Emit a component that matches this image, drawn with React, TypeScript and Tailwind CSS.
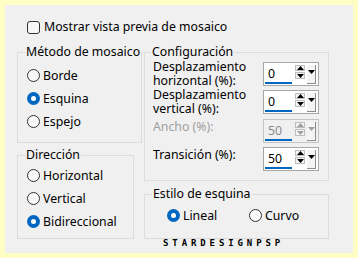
import React from "react";

const font = { fontFamily: '"Noto Sans", "Open Sans", sans-serif' };

function Radio({ checked, label }: { checked?: boolean; label: string }) {
  return (
    <div className="flex items-center h-[23px] whitespace-nowrap">
      {checked ? (
        <span className="shrink-0 w-[13px] h-[13px] rounded-full bg-[#0067c0] flex items-center justify-center">
          <span className="w-[5px] h-[5px] rounded-full bg-white" />
        </span>
      ) : (
        <span className="shrink-0 w-[13px] h-[13px] rounded-full border border-[#333333] bg-[#f7f7f7]" />
      )}
      <span className="ml-[3px] leading-[14px]">{label}</span>
    </div>
  );
}

function Tri({ dir, color }: { dir: "up" | "down"; color: string }) {
  return (
    <svg width="7" height="4" viewBox="0 0 7 4" className="block">
      {dir === "up" ? (
        <polygon points="3.5,0 7,4 0,4" fill={color} />
      ) : (
        <polygon points="0,0 7,0 3.5,4" fill={color} />
      )}
    </svg>
  );
}

function Spin({ value, disabled }: { value: string; disabled?: boolean }) {
  const c = disabled ? "#a0a0a0" : "#000000";
  return (
    <div
      className={`w-[56px] h-[24px] border flex ${
        disabled ? "border-[#c4c4c4] bg-[#f0f0f0]" : "border-[#a6a6a6] bg-white"
      }`}
    >
      <div className="w-[30px] pl-[1px] pt-[1px]">
        <div
          className={`w-[27px] h-[20px] border-b-2 border-[#0067c0] pl-[3px] leading-[20px] ${
            disabled ? "text-[#8a8a8a]" : "text-black"
          }`}
        >
          {value}
        </div>
      </div>
      <div className="flex flex-col pt-[2px] gap-[1px] ml-[1px]">
        <div className="w-[10px] h-[6px] border border-[#bdbdbd] bg-[#f4f4f4] flex items-center justify-center">
          <Tri dir="up" color={c} />
        </div>
        <div className="w-[10px] h-[7px] border border-[#bdbdbd] bg-[#f4f4f4] flex items-center justify-center">
          <Tri dir="down" color={c} />
        </div>
      </div>
      <div className="ml-[2px] mt-[2px] w-[9px] h-[19px] border-r border-b border-[#8c8c8c] bg-[#f4f4f4] flex justify-center pt-[5px]">
        <Tri dir="down" color={c} />
      </div>
    </div>
  );
}

export default function App() {
  return (
    <div
      className="w-[358px] h-[258px] bg-[#fefec4] p-[5px] text-[12.3px] text-black"
      style={font}
    >
      <div className="relative w-[348px] h-[248px] bg-[#f0f0f0] pt-[15px] pl-[12px]">
        <div className="flex items-center h-[14px] pl-[10px]">
          <span className="w-[13px] h-[13px] rounded-[3px] border border-[#333333] bg-[#f7f7f7]" />
          <span className="ml-[4px] leading-[14px] whitespace-nowrap">Mostrar vista previa de mosaico</span>
        </div>

        <div className="flex mt-[11px] gap-[10px]">
          <div className="flex flex-col gap-[5px] w-[117px]">
            <fieldset className="h-[98px] border border-[#dcdcdc] m-0 p-0 pl-[9px]">
              <legend className="ml-[-2px] px-[1px] leading-[14px] whitespace-nowrap">Método de mosaico</legend>
              <div className="pt-[5px] flex flex-col">
                <Radio label="Borde" />
                <Radio label="Esquina" checked />
                <Radio label="Espejo" />
              </div>
            </fieldset>
            <fieldset className="h-[91px] border border-[#dcdcdc] m-0 p-0 pl-[9px]">
              <legend className="ml-[-2px] px-[1px] leading-[14px] whitespace-nowrap">Dirección</legend>
              <div className="pt-[2px] flex flex-col">
                <Radio label="Horizontal" />
                <Radio label="Vertical" />
                <Radio label="Bidireccional" checked />
              </div>
            </fieldset>
          </div>

          <div className="flex flex-col gap-[6px] w-[185px]">
            <fieldset className="h-[136px] border border-[#dcdcdc] m-0 p-0 pl-[8px] pr-[9px]">
              <legend className="ml-[-2px] px-[1px] leading-[14px] whitespace-nowrap">Configuración</legend>
              <div className="pt-[1px] flex flex-col">
                <div className="flex justify-between h-[28px]">
                  <div className="leading-[14px] whitespace-nowrap">
                    Desplazamiento
                    <br />
                    horizontal (%):
                  </div>
                  <div className="mt-[2px]">
                    <Spin value="0" />
                  </div>
                </div>
                <div className="flex justify-between h-[29px]">
                  <div className="leading-[14px] whitespace-nowrap">
                    Desplazamiento
                    <br />
                    vertical (%):
                  </div>
                  <div className="mt-[2px]">
                    <Spin value="0" />
                  </div>
                </div>
                <div className="flex justify-between h-[28px]">
                  <div className="leading-[14px] pt-[3px] text-[#a0a0a0] whitespace-nowrap">Ancho (%):</div>
                  <div className="mt-[2px]">
                    <Spin value="50" disabled />
                  </div>
                </div>
                <div className="flex justify-between h-[28px]">
                  <div className="leading-[14px] pt-[3px] whitespace-nowrap">Transición (%):</div>
                  <div className="mt-[2px]">
                    <Spin value="50" />
                  </div>
                </div>
              </div>
            </fieldset>
            <fieldset className="h-[52px] border border-[#dcdcdc] m-0 p-0 pl-[22px]">
              <legend className="ml-[-15px] px-[1px] leading-[14px] whitespace-nowrap">Estilo de esquina</legend>
              <div className="pt-[3px] flex">
                <div className="w-[82px]">
                  <Radio label="Lineal" checked />
                </div>
                <Radio label="Curvo" />
              </div>
            </fieldset>
          </div>
        </div>

        <div
          className="absolute left-[158px] top-[234px] text-[9px] leading-[9px] font-bold tracking-[3.9px] text-black"
          style={{ fontFamily: '"DejaVu Sans Mono", monospace' }}
        >
          STARDESIGNPSP
        </div>
      </div>
    </div>
  );
}
